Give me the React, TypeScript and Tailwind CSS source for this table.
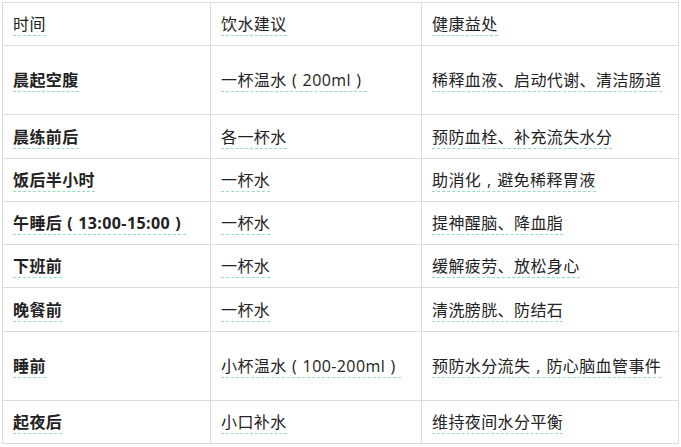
const rows = [
  { time: "晨起空腹", advice: "一杯温水（200ml）", benefit: "稀释血液、启动代谢、清洁肠道", h: "h-[69px]" },
  { time: "晨练前后", advice: "各一杯水", benefit: "预防血栓、补充流失水分", h: "h-[44px]" },
  { time: "饭后半小时", advice: "一杯水", benefit: "助消化，避免稀释胃液", h: "h-[43px]" },
  { time: "午睡后（13:00-15:00）", advice: "一杯水", benefit: "提神醒脑、降血脂", h: "h-[43px]" },
  { time: "下班前", advice: "一杯水", benefit: "缓解疲劳、放松身心", h: "h-[43px]" },
  { time: "晚餐前", advice: "一杯水", benefit: "清洗膀胱、防结石", h: "h-[44px]" },
  { time: "睡前", advice: "小杯温水（100-200ml）", benefit: "预防水分流失，防心脑血管事件", h: "h-[69px]" },
  { time: "起夜后", advice: "小口补水", benefit: "维持夜间水分平衡", h: "h-[43px]" },
];

const centred: Record<string, string> = { "（": "(", "）": ")", "，": "," };

// full-width parens and commas sit in the middle of their em box in the reference font
function Marked({ text }: { text: string }) {
  const parts = text.split(/([（），])/).filter(Boolean);
  return (
    <span className="inline-block border-b border-dashed border-[#92e2b8] leading-[21px]">
      {parts.map((p, i) =>
        centred[p] ? (
          <span key={i} className="inline-block w-[16px] text-center">
            {centred[p]}
          </span>
        ) : (
          <span key={i}>{p}</span>
        )
      )}
    </span>
  );
}

const cell = "border border-[#dcdcdc] px-[10px] align-middle";

export default function App() {
  return (
    <div className="min-h-screen bg-white p-[2px] font-['Open_Sans','Noto_Sans_CJK_SC',sans-serif] text-[16px] tracking-[0.4px] text-[#222]">
      <table className="w-[676px] table-fixed border-collapse">
        <colgroup>
          <col className="w-[208px]" />
          <col className="w-[211px]" />
          <col className="w-[257px]" />
        </colgroup>
        <tbody>
          <tr className="h-[43px]">
            <td className={cell}>
              <Marked text="时间" />
            </td>
            <td className={cell}>
              <Marked text="饮水建议" />
            </td>
            <td className={cell}>
              <Marked text="健康益处" />
            </td>
          </tr>
          {rows.map((r) => (
            <tr key={r.time} className={r.h}>
              <td className={cell + " font-bold"}>
                <Marked text={r.time} />
              </td>
              <td className={cell}>
                <Marked text={r.advice} />
              </td>
              <td className={cell}>
                <Marked text={r.benefit} />
              </td>
            </tr>
          ))}
        </tbody>
      </table>
    </div>
  );
}
